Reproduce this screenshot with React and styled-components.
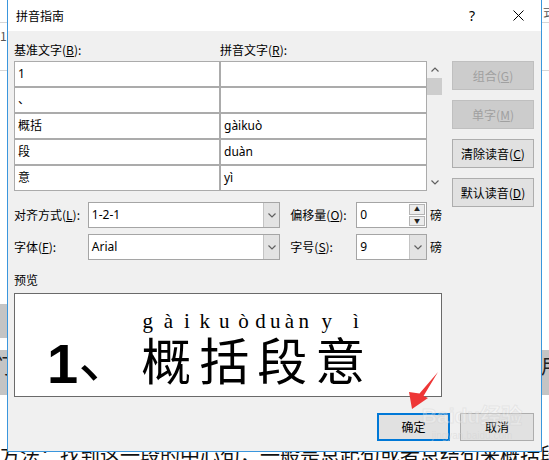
import React from "react";
import styled, { createGlobalStyle } from "styled-components";

const UI = `"Noto Sans CJK SC", "Noto Sans", sans-serif`;

const GlobalStyle = createGlobalStyle`
  html, body {
    margin: 0;
    padding: 0;
    background: #ffffff;
  }
  body {
    width: 549px;
    height: 460px;
    overflow: hidden;
    font-family: ${UI};
  }
`;

const baseRows = [
  ["1", ""],
  ["、", ""],
  ["概括", "gàikuò"],
  ["段", "duàn"],
  ["意", "yì"],
];

const ruby = [
  { han: "概", py: ["g", "à", "i"] },
  { han: "括", py: ["k", "u", "ò"] },
  { han: "段", py: ["d", "u", "à", "n"] },
  { han: "意", py: ["y", "ì"] },
];

function Chevron({ up }) {
  return (
    <svg width="8" height="5" viewBox="0 0 8 5">
      <polyline
        points={up ? "0.5,4.5 4,1 7.5,4.5" : "0.5,0.5 4,4 7.5,0.5"}
        fill="none"
        stroke="#606060"
        strokeWidth="1.2"
      />
    </svg>
  );
}

function App() {
  return (
    <Desktop>
      <GlobalStyle />
      <RibbonLine $top={22} />
      <RibbonLine $top={70} />
      <RibbonMark $left={0} $top={28}>12</RibbonMark>
      <RibbonMark $left={543} $top={4}>式</RibbonMark>
      <GreyBand $top={304} $height={34} $width="7px" />
      <GreyBand $top={350} $height={45} $width="100%">
        <BandText $left={-9}>们</BandText>
        <BandText $left={541}>用</BandText>
      </GreyBand>
      <DocText>方法：找到这一段的中心句，一般是总起句或者总结句来概括段意。</DocText>

      <Dialog>
        <TitleBar>
          <Title>拼音指南</Title>
          <TitleButton>
            <HelpMark>?</HelpMark>
          </TitleButton>
          <TitleButton>
            <svg width="11" height="11" viewBox="0 0 11 11">
              <path d="M0.5 0.5 L10.5 10.5 M10.5 0.5 L0.5 10.5" stroke="#000" strokeWidth="1" />
            </svg>
          </TitleButton>
        </TitleBar>

        <Body>
          <Main>
            <LeftCol>
              <HeaderRow>
                <span>基准文字(<u>B</u>):</span>
                <span>拼音文字(<u>R</u>):</span>
              </HeaderRow>
              <TableArea>
                <Table>
                  {baseRows.map(([base, py], i) => (
                    <React.Fragment key={i}>
                      <Cell>{base}</Cell>
                      <Cell>{py}</Cell>
                    </React.Fragment>
                  ))}
                </Table>
                <Scrollbar>
                  <ScrollArrow>
                    <Chevron up />
                  </ScrollArrow>
                  <Thumb />
                  <ScrollSpace />
                  <ScrollArrow>
                    <Chevron />
                  </ScrollArrow>
                </Scrollbar>
              </TableArea>

              <OptionRow $first>
                <Label $width={74}>对齐方式(<u>L</u>):</Label>
                <Combo $width={193}>
                  <ComboText>1-2-1</ComboText>
                  <DropButton>
                    <Chevron />
                  </DropButton>
                </Combo>
                <Label $width={66} $gap={10}>偏移量(<u>O</u>):</Label>
                <Combo $width={71}>
                  <ComboText>0</ComboText>
                  <SpinCol>
                    <SpinHalf>▲</SpinHalf>
                    <SpinHalf>▼</SpinHalf>
                  </SpinCol>
                </Combo>
                <Unit>磅</Unit>
              </OptionRow>
              <OptionRow>
                <Label $width={74}>字体(<u>F</u>):</Label>
                <Combo $width={193}>
                  <ComboText>Arial</ComboText>
                  <DropButton>
                    <Chevron />
                  </DropButton>
                </Combo>
                <Label $width={66} $gap={10}>字号(<u>S</u>):</Label>
                <Combo $width={71}>
                  <ComboText>9</ComboText>
                  <DropButton $wide>
                    <Chevron />
                  </DropButton>
                </Combo>
                <Unit>磅</Unit>
              </OptionRow>

              <PreviewLabel>预览</PreviewLabel>
              <PreviewBox>
                <Lead>
                  1<LeadComma>、</LeadComma>
                </Lead>
                {ruby.map((r) => (
                  <RubyCol key={r.han}>
                    <Pinyin>
                      {r.py.map((l, i) => (
                        <span key={i}>{l}</span>
                      ))}
                    </Pinyin>
                    <Han>{r.han}</Han>
                  </RubyCol>
                ))}
              </PreviewBox>
            </LeftCol>

            <ButtonCol>
              <SideButton disabled>组合(<u>G</u>)</SideButton>
              <SideButton disabled>单字(<u>M</u>)</SideButton>
              <SideButton>清除读音(<u>C</u>)</SideButton>
              <SideButton>默认读音(<u>D</u>)</SideButton>
            </ButtonCol>
          </Main>

          <Footer>
            <DialogButton $primary>确定</DialogButton>
            <DialogButton>取消</DialogButton>
          </Footer>
        </Body>
      </Dialog>

      <Watermark>
        <WatermarkBrand>Baidu经验</WatermarkBrand>
        <WatermarkUrl>jingyan.baidu.com</WatermarkUrl>
      </Watermark>

      <Arrow width="549" height="460" viewBox="0 0 549 460">
        <polygon
          points="412,409 428,398 423.5,396 438,372 419.5,393.5 409,392"
          fill="#ee3636"
        />
      </Arrow>
    </Desktop>
  );
}

export default App;

const Desktop = styled.div`
  position: relative;
  width: 549px;
  height: 460px;
  overflow: hidden;
  background: #ffffff;
`;

const RibbonLine = styled.div`
  position: absolute;
  left: 0;
  right: 0;
  top: ${(p) => p.$top}px;
  height: 1px;
  background: #d6d6d6;
`;

const RibbonMark = styled.div`
  position: absolute;
  left: ${(p) => p.$left}px;
  top: ${(p) => p.$top}px;
  font-family: ${UI};
  font-size: 12px;
  line-height: 16px;
  color: #555;
`;

const GreyBand = styled.div`
  position: absolute;
  left: 0;
  top: ${(p) => p.$top}px;
  width: ${(p) => p.$width};
  height: ${(p) => p.$height}px;
  background: #c4c4c4;
`;

const BandText = styled.span`
  position: absolute;
  left: ${(p) => p.$left}px;
  top: 4px;
  font-family: ${UI};
  font-size: 20px;
  line-height: 24px;
  color: #222;
`;

const DocText = styled.div`
  position: absolute;
  left: 0;
  top: 443px;
  white-space: nowrap;
  font-family: ${UI};
  font-size: 20px;
  line-height: 24px;
  color: #111;
`;

const Dialog = styled.div`
  position: absolute;
  left: 7px;
  top: -1px;
  width: 535px;
  height: 453px;
  box-sizing: border-box;
  border: 1px solid #3a96dd;
  background: #f0f0f0;
  display: flex;
  flex-direction: column;
  font-family: ${UI};
  font-size: 12px;
  color: #000;
`;

const TitleBar = styled.div`
  height: 31px;
  flex: none;
  display: flex;
  align-items: center;
  padding-left: 8px;
  background: #ffffff;
`;

const Title = styled.div`
  flex: 1;
  font-size: 12px;
  line-height: 16px;
`;

const TitleButton = styled.div`
  width: 46px;
  height: 31px;
  display: flex;
  align-items: center;
  justify-content: center;
`;

const HelpMark = styled.span`
  font-family: "Noto Sans", sans-serif;
  font-size: 14px;
  line-height: 16px;
`;

const Body = styled.div`
  flex: 1;
  display: flex;
  flex-direction: column;
  padding: 10px 7px 10px 6px;
`;

const Main = styled.div`
  display: flex;
  align-items: flex-start;
`;

const LeftCol = styled.div`
  width: 428px;
  display: flex;
  flex-direction: column;
`;

const HeaderRow = styled.div`
  display: grid;
  grid-template-columns: 206px 1fr;
  height: 18px;
  line-height: 18px;
  margin-bottom: 2px;
`;

const TableArea = styled.div`
  display: flex;
`;

const Table = styled.div`
  display: grid;
  grid-template-columns: 206px 207px;
  grid-auto-rows: 26px;
`;

const Cell = styled.div`
  box-sizing: border-box;
  border: 1px solid #ababab;
  background: #ffffff;
  padding-left: 3px;
  line-height: 24px;
  font-family: "Noto Sans", "Noto Sans CJK SC", sans-serif;
  font-size: 12px;
`;

const Scrollbar = styled.div`
  width: 15px;
  height: 130px;
  display: flex;
  flex-direction: column;
`;

const ScrollArrow = styled.div`
  height: 17px;
  display: flex;
  align-items: center;
  justify-content: center;
`;

const Thumb = styled.div`
  height: 17px;
  background: #cdcdcd;
`;

const ScrollSpace = styled.div`
  flex: 1;
`;

const OptionRow = styled.div`
  display: flex;
  align-items: center;
  height: 26px;
  margin-top: ${(p) => (p.$first ? 11 : 6)}px;
`;

const Label = styled.div`
  width: ${(p) => p.$width}px;
  margin-left: ${(p) => p.$gap || 0}px;
  line-height: 18px;
  white-space: nowrap;
`;

const Combo = styled.div`
  box-sizing: border-box;
  width: ${(p) => p.$width}px;
  height: 26px;
  border: 1px solid #a5a5a5;
  background: #ffffff;
  display: flex;
`;

const ComboText = styled.div`
  flex: 1;
  padding-left: 3px;
  line-height: 24px;
  font-family: "Noto Sans", sans-serif;
  font-size: 12px;
`;

const DropButton = styled.div`
  width: ${(p) => (p.$wide ? 16 : 15)}px;
  background: #e3e3e3;
  border-left: 1px solid #c4c4c4;
  display: flex;
  align-items: center;
  justify-content: center;
`;

const SpinCol = styled.div`
  width: 16px;
  display: flex;
  flex-direction: column;
  gap: 1px;
  padding: 1px 1px 1px 0;
`;

const SpinHalf = styled.div`
  flex: 1;
  box-sizing: border-box;
  border: 1px solid #b4b4b4;
  background: #ececec;
  display: flex;
  align-items: center;
  justify-content: center;
  font-size: 6px;
  line-height: 6px;
  color: #222;
`;

const Unit = styled.div`
  margin-left: 3px;
  line-height: 18px;
`;

const PreviewLabel = styled.div`
  margin-top: 11px;
  line-height: 18px;
`;

const PreviewBox = styled.div`
  margin-top: 4px;
  height: 104px;
  box-sizing: border-box;
  border: 1px solid #6a6a6a;
  background: #ffffff;
  display: flex;
  align-items: flex-start;
  padding: 16px 0 0 32px;
`;

const Lead = styled.div`
  margin-top: 21px;
  font-family: "Liberation Sans", Arial, sans-serif;
  font-weight: 700;
  font-size: 56px;
  line-height: 56px;
  white-space: nowrap;
`;

const LeadComma = styled.span`
  font-family: "Noto Sans CJK SC", sans-serif;
  font-weight: 400;
  margin-right: 3px;
  position: relative;
  top: -6px;
`;

const RubyCol = styled.div`
  width: 58px;
  display: flex;
  flex-direction: column;
  align-items: stretch;
`;

const Pinyin = styled.div`
  display: flex;
  justify-content: space-around;
  font-family: "Liberation Serif", serif;
  font-size: 21px;
  line-height: 22px;
`;

const Han = styled.div`
  margin-top: 1px;
  text-align: center;
  font-family: "Noto Sans CJK SC", sans-serif;
  font-weight: 400;
  font-size: 50px;
  line-height: 50px;
`;

const ButtonCol = styled.div`
  margin-left: 10px;
  width: 82px;
  padding-top: 20px;
  display: flex;
  flex-direction: column;
  gap: 10px;
`;

const SideButton = styled.div`
  height: 29px;
  box-sizing: border-box;
  border: 1px solid ${(p) => (p.disabled ? "#bfbfbf" : "#adadad")};
  background: ${(p) => (p.disabled ? "#cccccc" : "#e1e1e1")};
  color: ${(p) => (p.disabled ? "#a0a0a0" : "#000")};
  display: flex;
  align-items: center;
  justify-content: center;
  line-height: 18px;
  white-space: nowrap;
`;

const Footer = styled.div`
  margin-top: 16px;
  display: flex;
  justify-content: flex-end;
  gap: 10px;
`;

const DialogButton = styled.div`
  width: ${(p) => (p.$primary ? 73 : 74)}px;
  height: 28px;
  box-sizing: border-box;
  border: ${(p) => (p.$primary ? "2px solid #0078d7" : "1px solid #adadad")};
  background: #e1e1e1;
  display: flex;
  align-items: center;
  justify-content: center;
  line-height: 18px;
`;

const Watermark = styled.div`
  position: absolute;
  left: 420px;
  top: 402px;
  width: 104px;
  display: flex;
  flex-direction: column;
  align-items: center;
  pointer-events: none;
`;

const WatermarkBrand = styled.div`
  font-family: "Liberation Sans", "Noto Sans CJK SC", sans-serif;
  font-weight: 700;
  font-size: 21px;
  line-height: 28px;
  color: rgba(255, 255, 255, 0.3);
  -webkit-text-stroke: 1px rgba(205, 205, 205, 0.35);
  white-space: nowrap;
`;

const WatermarkUrl = styled.div`
  font-family: "Liberation Sans", sans-serif;
  font-size: 10px;
  line-height: 12px;
  color: rgba(210, 210, 210, 0.45);
`;

const Arrow = styled.svg`
  position: absolute;
  left: 0;
  top: 0;
  pointer-events: none;
`;
